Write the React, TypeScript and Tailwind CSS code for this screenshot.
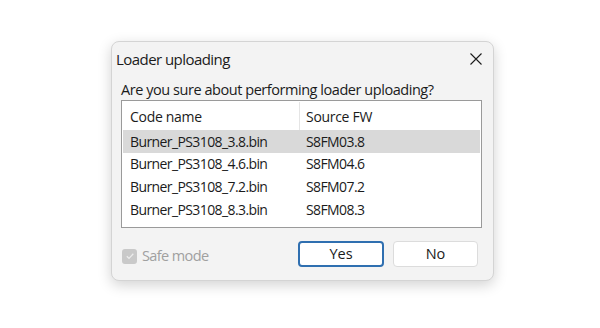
import React from "react";

const rows = [
  ["Burner_PS3108_3.8.bin", "S8FM03.8"],
  ["Burner_PS3108_4.6.bin", "S8FM04.6"],
  ["Burner_PS3108_7.2.bin", "S8FM07.2"],
  ["Burner_PS3108_8.3.bin", "S8FM08.3"],
];

export default function App() {
  return (
    <div
      className="w-[600px] h-[328px] bg-white relative overflow-hidden text-[#1b1b1b]"
      style={{ fontFamily: '"Open Sans", "Noto Sans", sans-serif' }}
    >
      <div className="absolute left-[111px] top-[41px] w-[383px] h-[240px] rounded-[8px] bg-[#f3f3f3] border border-[#d4d4d4] shadow-[0_4px_14px_rgba(0,0,0,0.18)] flex flex-col">
        <div className="flex items-center justify-between h-[32px] pl-[4px] pr-[9px] mt-[1px]">
          <span className="text-[15px] tracking-[-0.55px]">Loader uploading</span>
          <svg width="14" height="14" viewBox="0 0 14 14" className="mr-[1px]">
            <path d="M1.5 1.5 L12.5 12.5 M12.5 1.5 L1.5 12.5" stroke="#1b1b1b" strokeWidth="1.1" fill="none" />
          </svg>
        </div>
        <div className="pl-[9px] pr-[11px] mt-[4px] flex flex-col">
          <div className="text-[14.5px] leading-[22px] h-[21px] tracking-[-0.45px]">
            Are you sure about performing loader uploading?
          </div>
          <div className="h-[128px] bg-white border border-[#9a9a9a] flex flex-col pt-[1px] px-[1px]">
            <div className="flex h-[28px] items-center text-[14px] tracking-[-0.3px]">
              <div className="w-[177px] pl-[7px] border-r border-[#e5e5e5] h-full flex items-center">Code name</div>
              <div className="pl-[6px]">Source FW</div>
            </div>
            {rows.map((r, i) => (
              <div
                key={r[0]}
                className={`flex h-[22.6px] items-center text-[14px] tracking-[-0.6px] ${i === 0 ? "bg-[#d9d9d9]" : ""}`}
              >
                <div className="w-[177px] pl-[7px]">{r[0]}</div>
                <div className="pl-[6px]">{r[1]}</div>
              </div>
            ))}
          </div>
          <div className="flex items-center mt-[13px] h-[26px]">
            <div className="flex items-center gap-[5px] flex-1 mt-[4px] pl-[1px]">
              <div className="w-[15px] h-[15px] rounded-[3px] bg-[#c9c9c9] flex items-center justify-center">
                <svg width="10" height="10" viewBox="0 0 10 10">
                  <path d="M1.8 5.2 L4 7.4 L8.3 2.8" stroke="#ececec" strokeWidth="1.3" fill="none" />
                </svg>
              </div>
              <span className="text-[14.5px] text-[#a0a0a0] tracking-[-0.6px]">Safe mode</span>
            </div>
            <button className="w-[86px] h-[26px] rounded-[4px] bg-white border-2 border-[#2f6fb0] text-[14.5px] flex items-center justify-center mr-[9px]">
              Yes
            </button>
            <button className="w-[85px] h-[26px] rounded-[4px] bg-white border border-[#dcdcdc] text-[14.5px] flex items-center justify-center mr-[4px]">
              No
            </button>
          </div>
        </div>
      </div>
    </div>
  );
}
